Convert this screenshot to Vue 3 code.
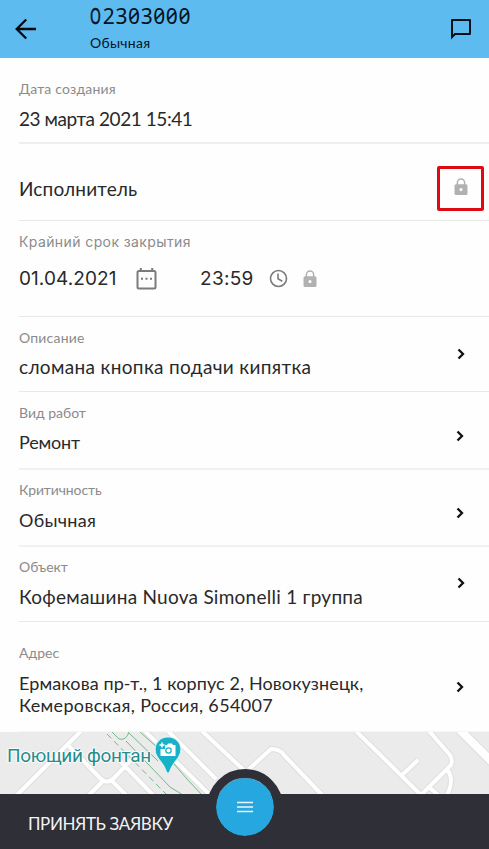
<script setup>
const details = [
  { key: 'description', label: 'Описание', value: 'сломана кнопка подачи кипятка' },
  { key: 'work', label: 'Вид работ', value: 'Ремонт' },
  { key: 'severity', label: 'Критичность', value: 'Обычная' },
  { key: 'object', label: 'Объект', value: 'Кофемашина Nuova Simonelli 1 группа' },
]

const streets =
  'M81-1L17 63M68 13L100 46Q107 53 114 46L132 27M102 50L88 64M112 49L127 64M118 27L155 65M145-1L210 63M168-1L216 47M202-1L248 42M249 37L271 17Q280 17 284 23L322 63M356-1L424 66M402 43L418 28M420 64L451 33Q453 29 450 23L429-1M447 37Q455 48 447 63M429 55L438 63'
</script>

<template>
  <div class="screen">
    <header class="header">
      <svg class="back" width="22" height="22" viewBox="0 0 22 22">
        <path d="M21 11H2M11.2 1.5L1.7 11l9.5 9.5" />
      </svg>
      <div class="heading">
        <div class="number"><span class="letter">О</span>2303000</div>
        <div class="kind">Обычная</div>
      </div>
      <svg class="chat" width="22" height="22" viewBox="0 0 22 22">
        <path d="M2 2.3Q2 2 2.3 2H19.7Q20 2 20 2.3V15.7Q20 16 19.7 16H5L2 19Z" />
      </svg>
    </header>

    <section class="row created">
      <div class="label">Дата создания</div>
      <div class="value">23 марта 2021 15:41</div>
    </section>

    <section class="row assignee">
      <div class="value">Исполнитель</div>
      <div class="highlight">
        <svg class="lock" width="14" height="18" viewBox="0 0 14 18">
          <path class="shackle" d="M3.4 7V4.5a3.6 3.6 0 0 1 7.2 0V7" />
          <path class="case" fill-rule="evenodd" d="M2 6.2h10a1.5 1.5 0 0 1 1.5 1.5v7.8a1.5 1.5 0 0 1-1.5 1.5H2A1.5 1.5 0 0 1 .5 15.5V7.7A1.5 1.5 0 0 1 2 6.2zM7 10a1.6 1.6 0 1 0 0 3.2 1.6 1.6 0 0 0 0-3.2z" />
        </svg>
      </div>
    </section>

    <section class="row deadline">
      <div class="label">Крайний срок закрытия</div>
      <div class="when">
        <div class="value date">01.04.2021</div>
        <svg class="calendar" width="21" height="22" viewBox="0 0 21 22">
          <rect x="1.5" y="3" width="18" height="17.5" rx="1.5" />
          <path d="M4.8 0v3M16.2 0v3" />
          <path class="dots" d="M5 10.8h2M9.5 10.8h2M14 10.8h2" />
        </svg>
        <div class="value time">23:59</div>
        <svg class="clock" width="19" height="19" viewBox="0 0 19 19">
          <circle cx="9.5" cy="9.5" r="8" />
          <path d="M9 4.5v5.3l4.3 2.5" />
        </svg>
        <svg class="lock" width="14" height="18" viewBox="0 0 14 18">
          <path class="shackle" d="M3.4 7V4.5a3.6 3.6 0 0 1 7.2 0V7" />
          <path class="case" fill-rule="evenodd" d="M2 6.2h10a1.5 1.5 0 0 1 1.5 1.5v7.8a1.5 1.5 0 0 1-1.5 1.5H2A1.5 1.5 0 0 1 .5 15.5V7.7A1.5 1.5 0 0 1 2 6.2zM7 10a1.6 1.6 0 1 0 0 3.2 1.6 1.6 0 0 0 0-3.2z" />
        </svg>
      </div>
    </section>

    <section v-for="item in details" :key="item.key" class="row" :class="item.key">
      <div class="label">{{ item.label }}</div>
      <div class="value">{{ item.value }}</div>
      <svg class="chevron" width="8" height="12" viewBox="0 0 8 12"><path d="M1.5 1.5L6 6l-4.5 4.5" /></svg>
    </section>

    <section class="row address">
      <div class="label">Адрес</div>
      <div class="value"><span class="line1">Ермакова пр-т., 1 корпус 2, Новокузнецк,</span><br><span class="line2">Кемеровская, Россия, 654007</span></div>
      <svg class="chevron" width="8" height="12" viewBox="0 0 8 12"><path d="M1.5 1.5L6 6l-4.5 4.5" /></svg>
    </section>

    <div class="map">
      <svg class="streets" width="489" height="63" viewBox="0 0 489 63">
        <g class="edge">
          <path :d="streets" />
          <path class="avenue" d="M459-3L493 31" />
        </g>
        <g class="road">
          <path :d="streets" />
          <path class="avenue" d="M459-3L493 31" />
        </g>
        <g class="paths">
          <path d="M112 0L119 7Q126 9 129 0M126 9L170 55L183 63M129 1L158 29M140 0L168 25L187 47L202 63" />
          <path class="dashed" d="M107 2L167 63" />
        </g>
      </svg>
      <div class="place">Поющий фонтан</div>
      <svg class="pin" width="28" height="39" viewBox="0 0 28 39">
        <path class="drop" d="M14 1C6.6 1 1.2 6.500 1.200 13.500c0 8.500 7.800 11.500 11.300 22.300q1.500 2.800 3 0C19 25 26.800 22 26.800 13.500 26.800 6.500 21.400 1 14 1z" />
        <path class="camera" fill-rule="evenodd" d="M11 9h2l1-1.500h4L19 9h2.500v11h-15v-7H11zM14.500 11.200a3.300 3.300 0 1 0 0 6.600 3.300 3.300 0 0 0 0-6.600z" />
        <circle class="camera" cx="14.500" cy="14.500" r="2" />
        <path class="plus" d="M8 6.500v5M5.500 9h5" />
      </svg>
    </div>

    <footer class="footer">
      <div class="accept">ПРИНЯТЬ ЗАЯВКУ</div>
      <div class="menu">
        <svg width="16" height="12" viewBox="0 0 16 12"><path d="M0 1.5h16M0 6h16M0 10.5h16" /></svg>
      </div>
    </footer>
  </div>
</template>

<style>
body { margin: 0; background: #fff; }
</style>

<style scoped>
* { box-sizing: border-box; }
.screen {
  width: 489px;
  height: 849px;
  overflow: hidden;
  display: flex;
  flex-direction: column;
  background: #fefefe;
  font-family: Lato, "Open Sans", sans-serif;
  color: #29292b;
}
svg { display: block; flex: none; fill: none; }
.header {
  height: 58px;
  flex: none;
  background: #5dbbf0;
  display: flex;
  align-items: flex-start;
  color: #06131e;
}
.back { margin: 18px 0 0 15px; stroke: #05080d; stroke-width: 2.3; }
.chat { margin: 18px 17px 0 0; stroke: #05101d; stroke-width: 2; }
.heading { margin-left: 53px; flex: 1; }
.number {
  height: 33px;
  line-height: 33px;
  font-family: "Noto Sans", sans-serif;
  font-size: 21px;
  font-feature-settings: "zero";
  letter-spacing: 0.6px;
  white-space: nowrap;
}
.letter {
  display: inline-block;
  width: 12.8px;
  transform: scaleX(0.68);
  transform-origin: 0 0;
  -webkit-text-stroke: 0.5px currentColor;
}
.kind { line-height: 20px; font-size: 14px; letter-spacing: 0.3px; }

.row {
  position: relative;
  flex: none;
  margin-left: 19px;
  border-bottom: 1px solid #e7eaeb;
  white-space: nowrap;
}
.label { height: 16px; line-height: 16px; font-size: 14px; letter-spacing: 0.2px; color: #8b8b8b; }
.value { height: 24px; line-height: 24px; font-size: 19px; letter-spacing: 0.3px; }
.created { height: 86px; padding-top: 23px; border-bottom: 2px solid #efefef; }
.created .value { margin-top: 10px; letter-spacing: -0.44px; }
.assignee {
  height: 77px;
  display: flex;
  justify-content: space-between;
  align-items: flex-start;
  padding: 22px 5px 0 0;
}
.assignee .value { margin-top: 11px; letter-spacing: 0.15px; }
.highlight {
  width: 47px;
  height: 45px;
  border: 3px solid #de0c12;
  border-radius: 2px;
  display: flex;
  justify-content: center;
  padding: 9px 0 0 1px;
}
.case { fill: #b1b1b1; }
.shackle { stroke: #b1b1b1; stroke-width: 1.5; }
.deadline { height: 96px; padding-top: 13px; font-family: Inter, sans-serif; }
.deadline .label { letter-spacing: 0.4px; }
.when { display: flex; align-items: flex-start; margin-top: 17px; }
.date { width: 117px; letter-spacing: 0.08px; }
.calendar { stroke: #7b7b7b; stroke-width: 2; margin-top: 1px; }
.calendar .dots { stroke-width: 2; }
.time { width: 69px; margin-left: 43px; }
.clock { stroke: #7b7b7b; stroke-width: 1.6; margin-top: 2px; }
.deadline .lock { margin: 3px 0 0 14.5px; }
.chevron { position: absolute; right: 24px; stroke: #111; stroke-width: 2.3; }
.description { height: 75px; padding-top: 13px; }
.description .value { margin-top: 9px; letter-spacing: 0.34px; }
.description .chevron { top: 31px; }
.work { height: 78px; padding-top: 13px; border-bottom: 2px solid #f1f1f1; }
.work .label { letter-spacing: 0; }
.work .value { margin-top: 9px; font-size: 18px; letter-spacing: -0.2px; }
.work .chevron { top: 38px; right: 25.5px; }
.severity { height: 77px; padding-top: 12px; border-bottom: 2px solid #f1f1f1; }
.severity .label { letter-spacing: -0.12px; }
.severity .value { margin-top: 10px; font-size: 18px; letter-spacing: 0.3px; }
.severity .chevron { top: 37px; right: 25.5px; }
.object { height: 75px; padding-top: 12px; }
.object .label { letter-spacing: 0; }
.object .value { margin-top: 10px; letter-spacing: 0.26px; }
.object .chevron { top: 30px; }
.address { height: 110px; padding-top: 23px; border-bottom: 1px solid #f6f6f6; }
.address .label { letter-spacing: 0; }
.address .value { height: 46px; line-height: 22px; font-size: 18px; margin-top: 11px; }
.line1 { letter-spacing: 0.1px; }
.line2 { letter-spacing: 0.34px; }
.address .chevron { top: 59px; right: 25.5px; }

.map { position: relative; flex: none; height: 62px; overflow: hidden; background: #ebebeb; }
.streets { position: absolute; top: 0; left: 0; }
.edge { stroke: #dedede; stroke-width: 6; stroke-linejoin: round; }
.road { stroke: #fff; stroke-width: 4; stroke-linejoin: round; }
.edge .avenue { stroke-width: 10; }
.road .avenue { stroke-width: 8; }
.paths { stroke: #76b98a; stroke-width: 1; }
.dashed { stroke-dasharray: 6 4; }
.place {
  position: absolute;
  left: 7px;
  top: 13px;
  line-height: 22px;
  font-family: Roboto, sans-serif;
  font-size: 19px;
  letter-spacing: -0.33px;
  color: #258c8d;
  text-shadow: 0 0 2px #fff, 1px 0 1px #fff, -1px 0 1px #fff, 0 1px 1px #fff, 0 -1px 1px #fff;
  white-space: nowrap;
}
.pin { position: absolute; left: 154px; top: 4px; }
.drop { fill: #18b2c8; stroke: #e9f7f8; stroke-width: 0.8; }
.camera { fill: #fff; }
.plus { stroke: #fff; stroke-width: 1.5; }

.footer { position: relative; flex: none; height: 55px; background: #2e2f37; }
.accept { padding: 18px 0 0 28px; line-height: 24px; font-size: 17px; letter-spacing: -0.4px; color: #f3f3f4; white-space: nowrap; }
.menu {
  position: absolute;
  left: 207px;
  top: -25px;
  width: 76px;
  height: 76px;
  border: 9px solid #2e2f37;
  border-radius: 50%;
  background: #26a7df;
  background-clip: padding-box;
  display: flex;
  align-items: center;
  justify-content: center;
  stroke: #eef8fc;
  stroke-width: 1.7;
}
</style>
